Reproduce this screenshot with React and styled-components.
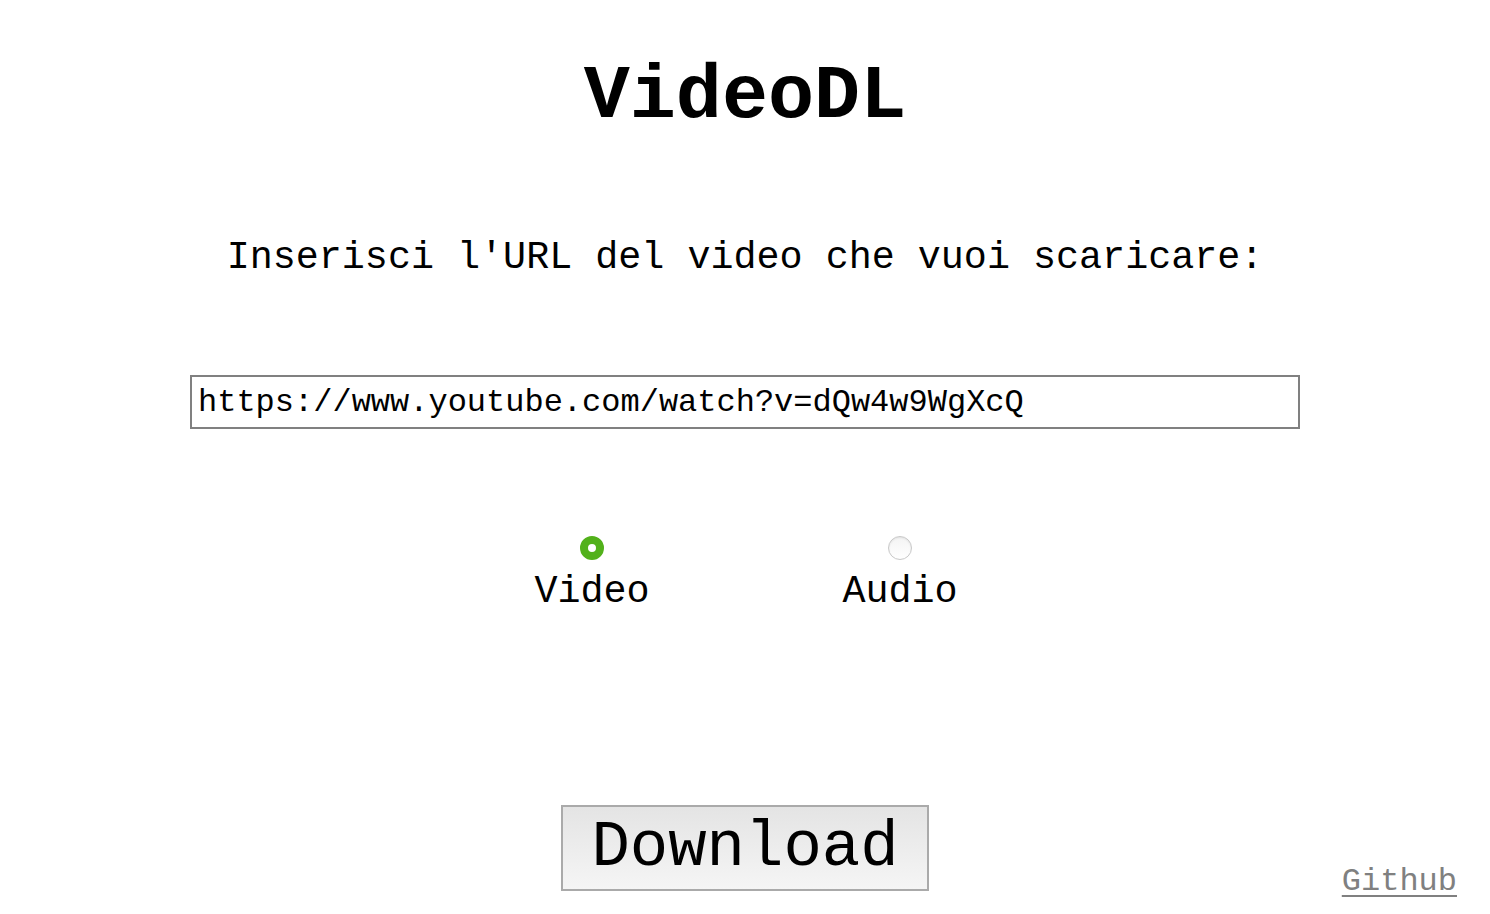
import React, { useState } from "react";
import styled, { createGlobalStyle } from "styled-components";

const Global = createGlobalStyle`
  html, body { margin: 0; padding: 0; background: #ffffff; }
  body { font-family: "Liberation Mono", "Courier New", monospace; color: #000; }
`;

const Page = styled.main`
  position: relative;
  width: 1490px;
  height: 914px;
  display: flex;
  flex-direction: column;
  align-items: center;
  overflow: hidden;
`;

const Title = styled.h1`
  margin: 55px 0 0;
  font-size: 76.8px;
  line-height: 84px;
  font-weight: 700;
`;

const Prompt = styled.p`
  margin: 97px 0 0;
  font-size: 38.4px;
  line-height: 44px;
`;

const UrlInput = styled.input`
  box-sizing: border-box;
  margin-top: 95px;
  width: 1110px;
  height: 54px;
  border: 2px solid #808080;
  padding: 0 6px;
  font-family: "Liberation Mono", "Courier New", monospace;
  font-size: 32px;
  color: #000;
  background: #fff;
  outline: none;
`;

const Choices = styled.div`
  margin-top: 107px;
  margin-left: 2px;
  display: flex;
  gap: 148px;
`;

const Choice = styled.label`
  width: 160px;
  display: flex;
  flex-direction: column;
  align-items: center;
  gap: 10px;
  font-size: 38.4px;
  line-height: 44px;
  cursor: pointer;
`;

const Radio = styled.input`
  appearance: none;
  margin: 0;
  width: 24px;
  height: 24px;
  border-radius: 50%;
  box-sizing: border-box;
  border: 1px solid #c8c8c8;
  background: linear-gradient(#f4f4f4, #ffffff);
  box-shadow: inset 0 1px 2px rgba(0,0,0,0.08);
  cursor: pointer;

  &:checked {
    border: 8px solid #52b11b;
    background: #fff;
    box-shadow: none;
  }
`;

const DownloadButton = styled.button`
  margin-top: 191px;
  box-sizing: border-box;
  width: 368px;
  height: 86px;
  border: 2px solid #aaaaaa;
  background: linear-gradient(#e4e4e4, #f5f5f5);
  font-family: "Liberation Mono", "Courier New", monospace;
  font-size: 64px;
  color: #000;
  padding: 0;
  cursor: pointer;
`;

const GithubLink = styled.a`
  position: absolute;
  right: 33px;
  bottom: 14px;
  font-size: 32px;
  line-height: 36px;
  color: #808080;
  text-decoration: underline;
  text-decoration-thickness: 2px;
  text-underline-offset: 5px;
`;

export default function App() {
  const [mode, setMode] = useState("video");
  const [url, setUrl] = useState("https://www.youtube.com/watch?v=dQw4w9WgXcQ");
  return (
    <Page>
      <Global />
      <Title>VideoDL</Title>
      <Prompt>Inserisci l'URL del video che vuoi scaricare:</Prompt>
      <UrlInput value={url} onChange={(e) => setUrl(e.target.value)} />
      <Choices>
        <Choice>
          <Radio type="radio" name="mode" checked={mode === "video"} onChange={() => setMode("video")} />
          Video
        </Choice>
        <Choice>
          <Radio type="radio" name="mode" checked={mode === "audio"} onChange={() => setMode("audio")} />
          Audio
        </Choice>
      </Choices>
      <DownloadButton>Download</DownloadButton>
      <GithubLink href="#">Github</GithubLink>
    </Page>
  );
}
